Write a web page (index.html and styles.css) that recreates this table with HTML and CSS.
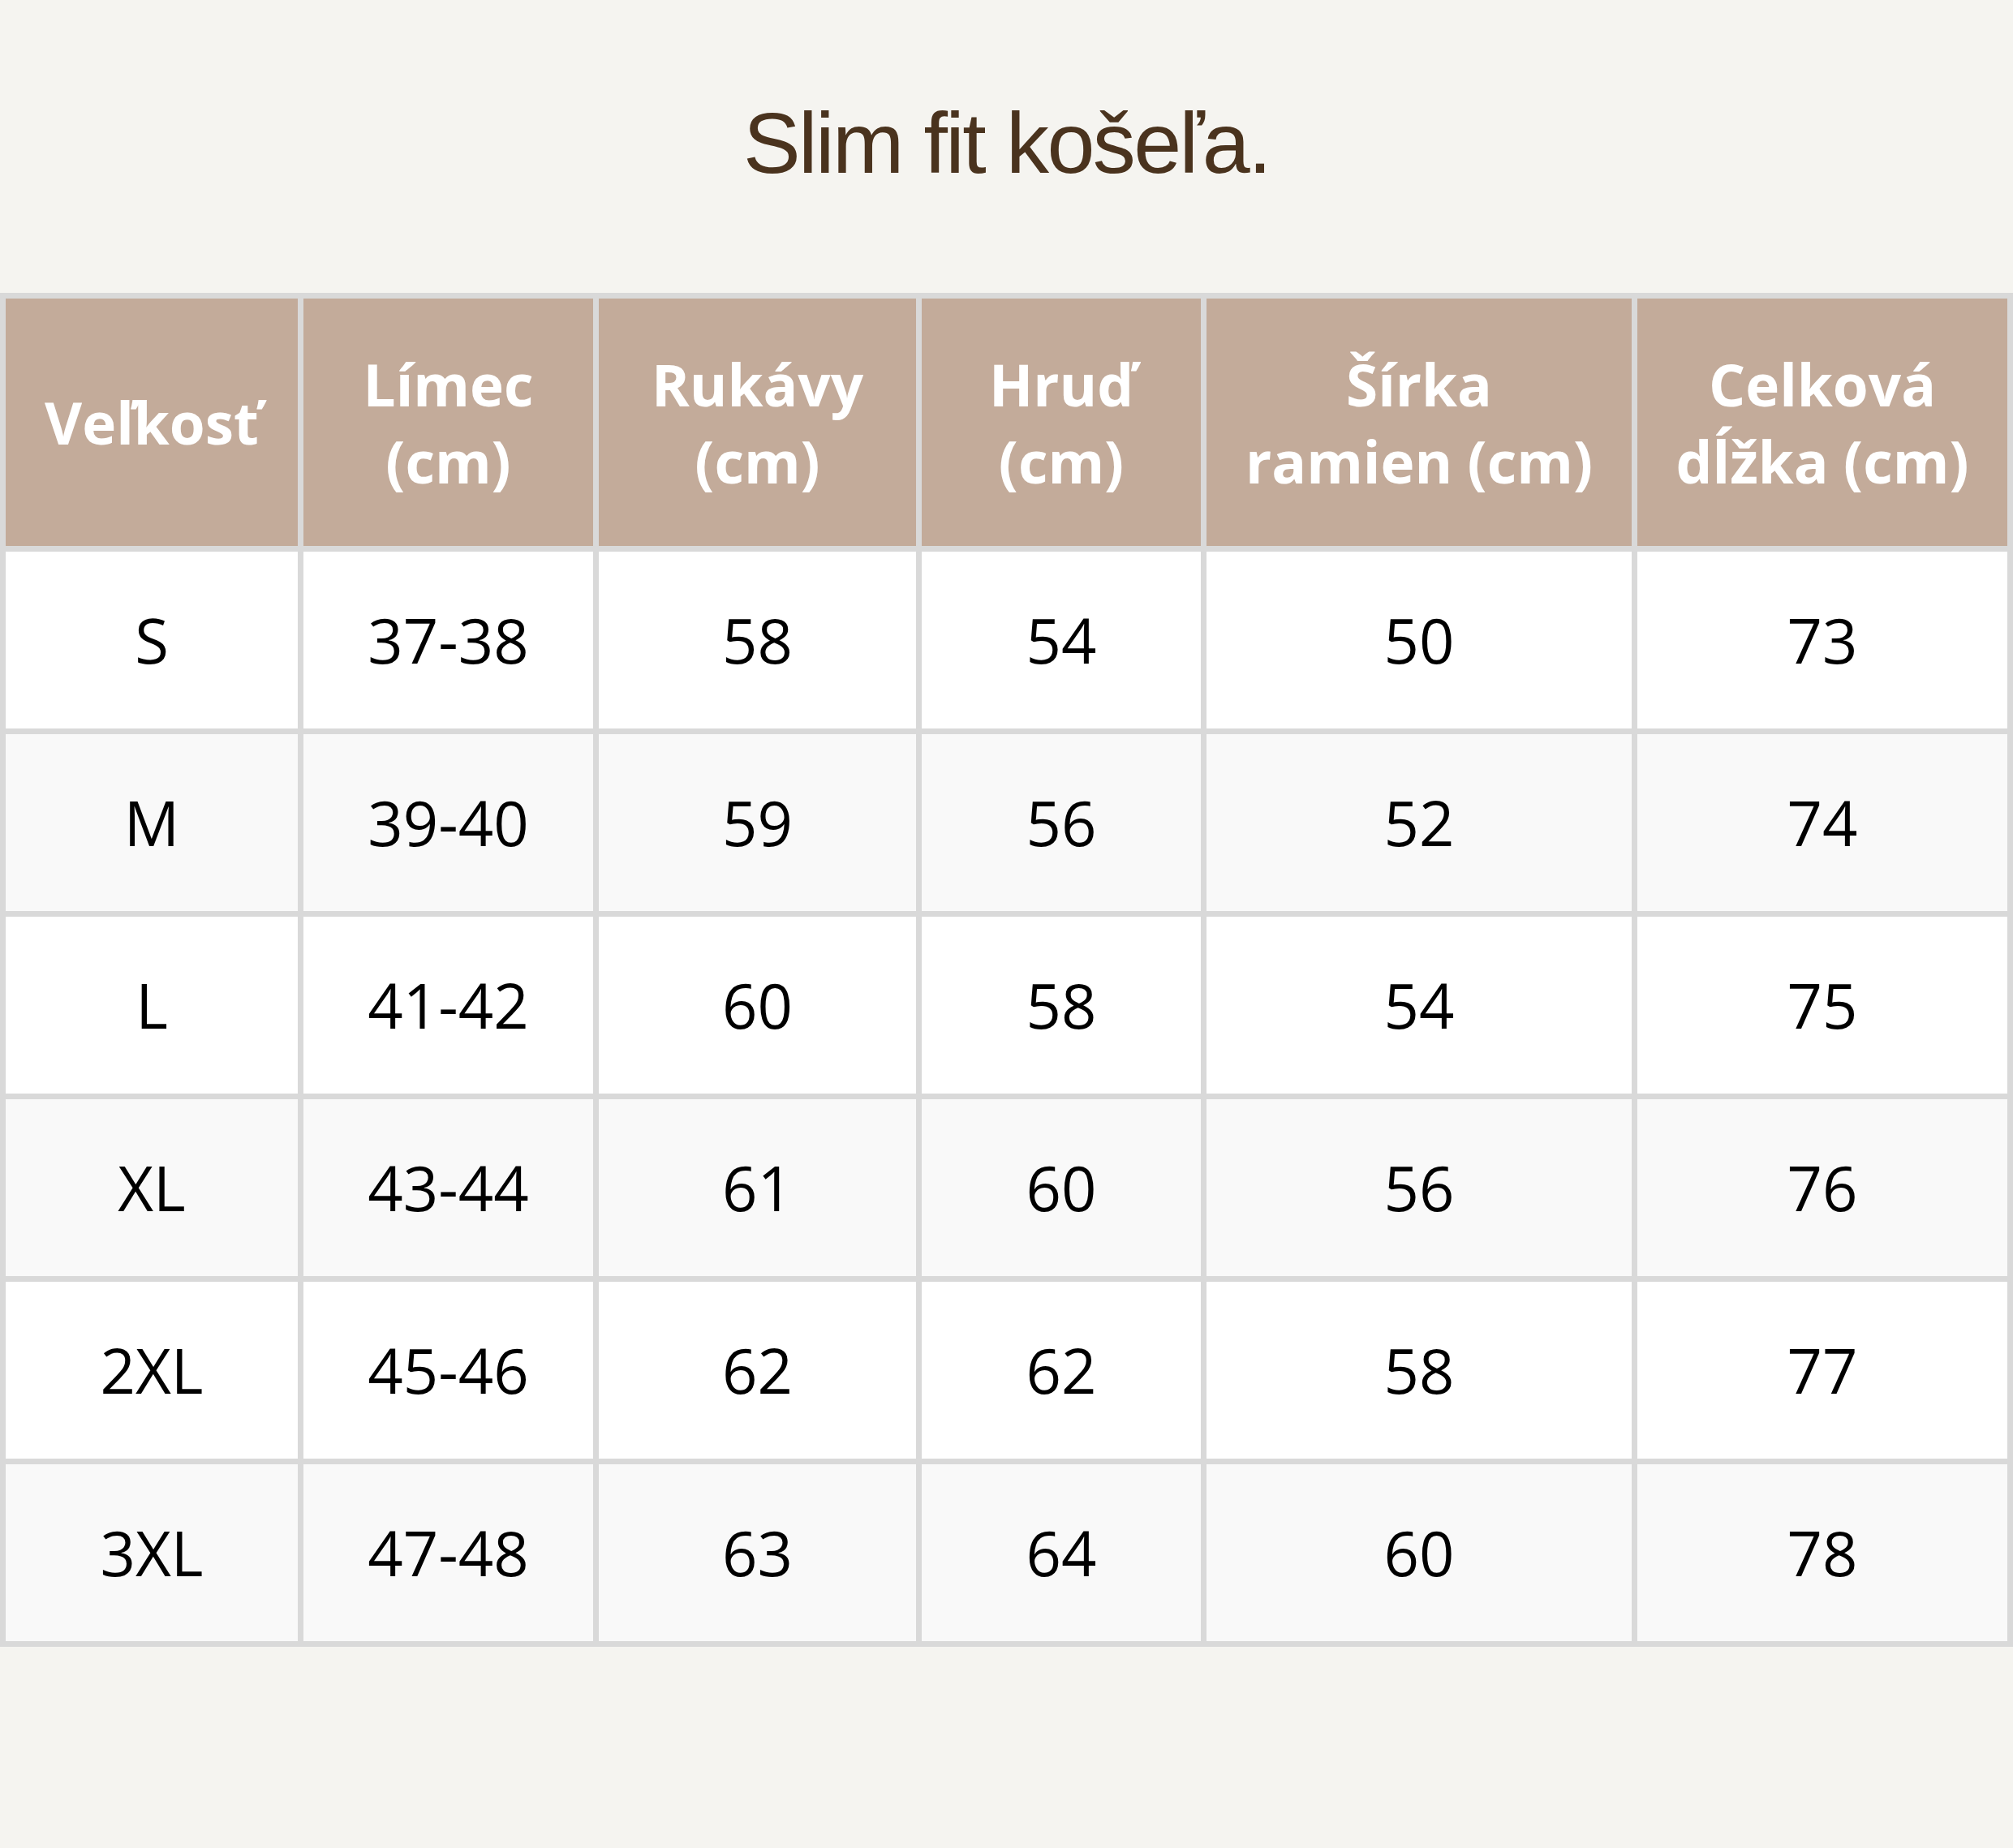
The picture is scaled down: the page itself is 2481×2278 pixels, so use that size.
FILE: index.html
```html
<!DOCTYPE html>
<html lang="sk">
<head>
<meta charset="utf-8">
<title>Slim fit košeľa.</title>
<link rel="stylesheet" href="styles.css">
</head>
<body>
<h1 class="title">Slim fit košeľa.</h1>
<table class="sizes">
  <colgroup>
    <col class="c1"><col class="c2"><col class="c3"><col class="c4"><col class="c5"><col class="c6">
  </colgroup>
  <thead>
    <tr>
      <th>Veľkosť</th>
      <th>Límec<br>(cm)</th>
      <th>Rukávy<br>(cm)</th>
      <th>Hruď<br>(cm)</th>
      <th>Šírka<br>ramien (cm)</th>
      <th>Celková<br>dĺžka (cm)</th>
    </tr>
  </thead>
  <tbody>
    <tr><td>S</td><td>37-38</td><td>58</td><td>54</td><td>50</td><td>73</td></tr>
    <tr><td>M</td><td>39-40</td><td>59</td><td>56</td><td>52</td><td>74</td></tr>
    <tr><td>L</td><td>41-42</td><td>60</td><td>58</td><td>54</td><td>75</td></tr>
    <tr><td>XL</td><td>43-44</td><td>61</td><td>60</td><td>56</td><td>76</td></tr>
    <tr><td>2XL</td><td>45-46</td><td>62</td><td>62</td><td>58</td><td>77</td></tr>
    <tr><td>3XL</td><td>47-48</td><td>63</td><td>64</td><td>60</td><td>78</td></tr>
  </tbody>
</table>
</body>
</html>
```
FILE: styles.css
```css
html, body {
  margin: 0;
  padding: 0;
  background: #f5f4f0;
}
body {
  width: 2481px;
  min-height: 2278px;
}
.title {
  margin: 123px 0 0 0;
  height: 106px;
  font-family: "Liberation Sans", Arial, sans-serif;
  font-weight: normal;
  font-size: 106px;
  line-height: 106px;
  color: #4a331e;
  text-align: center;
  letter-spacing: -2.6px;
}
.sizes {
  margin-top: 132px;
  width: 2481px;
  table-layout: fixed;
  border-collapse: separate;
  border-spacing: 7px;
  background: #d9d9d9;
  font-family: "Open Sans", sans-serif;
}
.c1 { width: 360px; }
.c2 { width: 357px; }
.c3 { width: 391px; }
.c4 { width: 344px; }
.c5 { width: 524px; }
.c6 { width: 456px; }
.sizes th {
  height: 305px;
  padding: 0;
  background: #c3ab9a;
  color: #ffffff;
  font-weight: 700;
  font-size: 71px;
  line-height: 95px;
  text-align: center;
  vertical-align: middle;
}
.sizes td {
  height: 218px;
  padding: 0;
  background: #ffffff;
  color: #000000;
  font-size: 76px;
  line-height: 96px;
  text-align: center;
  vertical-align: middle;
}
.sizes tbody tr:nth-child(even) td {
  background: #f9f9f9;
}
```
